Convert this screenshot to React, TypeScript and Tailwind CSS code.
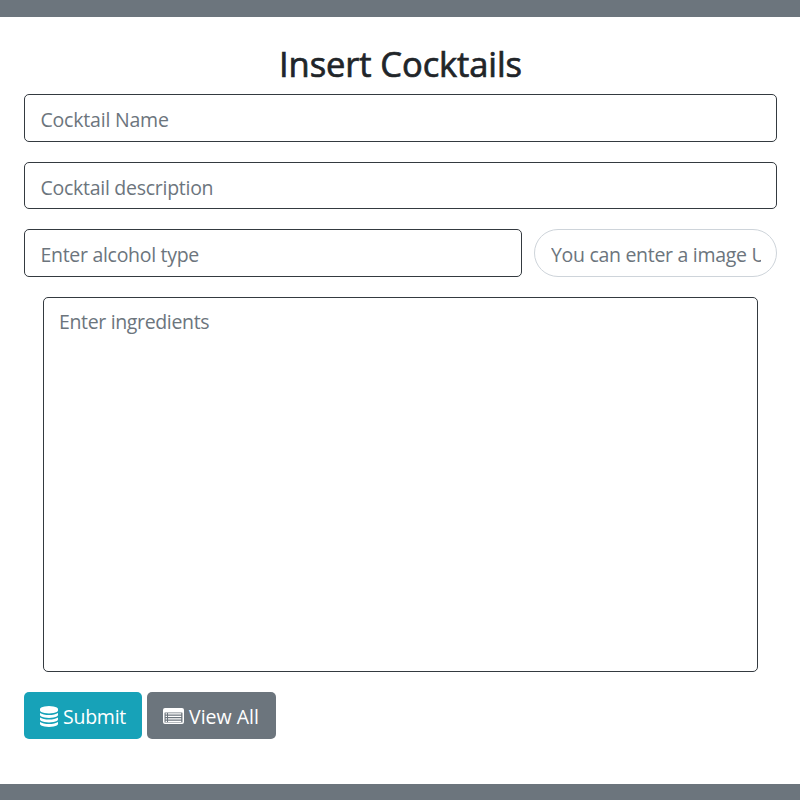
const field =
  "block w-full rounded-[5px] border border-[#343a40] bg-white pr-[15px] pl-[15.5px] pt-[3px] text-[19.5px] text-[#495057] outline-none placeholder:text-[#6c757d] placeholder:opacity-100";

function DatabaseIcon() {
  return (
    <svg className="mr-[5px] h-[21px] w-[18px] shrink-0" viewBox="0 0 1536 1792" fill="currentColor">
      <path d="M768 768q237 0 443-43t325-127v170q0 69-103 128t-280 93.5-385 34.5-385-34.5-280-93.5-103-128v-170q119 84 325 127t443 43zm0 768q237 0 443-43t325-127v170q0 69-103 128t-280 93.5-385 34.5-385-34.5-280-93.5-103-128v-170q119 84 325 127t443 43zm0-384q237 0 443-43t325-127v170q0 69-103 128t-280 93.5-385 34.5-385-34.5-280-93.5-103-128v-170q119 84 325 127t443 43zm0-1152q208 0 385 34.5t280 93.5 103 128v128q0 69-103 128t-280 93.5-385 34.5-385-34.5-280-93.5-103-128v-128q0-69 103-128t280-93.5 385-34.5z" />
    </svg>
  );
}

function ListIcon() {
  return (
    <svg className="mr-[5px] mb-px h-4 w-[21px] shrink-0" viewBox="0 0 21 16" fill="currentColor">
      <path
        fillRule="evenodd"
        d="M2 0H19Q21 0 21 2V14Q21 16 19 16H2Q0 16 0 14V2Q0 0 2 0ZM2 4.5Q1.5 4.5 1.5 5V14Q1.5 14.6 2 14.6H19Q19.5 14.6 19.5 14V5Q19.5 4.5 19 4.5Z"
      />
      <path d="M2.6 5.2h1.4v1.2H2.6zM5 5.2h13.2v1.2H5zM2.6 7.7h1.4v1.3H2.6zM5 7.7h13.2v1.3H5zM2.6 10.2h1.4v1.3H2.6zM5 10.2h13.2v1.3H5zM2.6 12.7h1.4V14H2.6zM5 12.7h13.2V14H5z" />
    </svg>
  );
}

export default function App() {
  return (
    <div className="flex h-[800px] w-[800px] flex-col overflow-hidden border-t-[17px] border-b-[16px] border-[#6c757d] bg-white pr-[23px] pl-6 font-['Open_Sans','Noto_Sans',sans-serif]">
      <h1 className="mt-[22px] h-[55px] text-center text-[34.5px] leading-[50px] font-medium tracking-[-0.1px] text-[#212529] [-webkit-text-stroke:0.7px_#212529]">
        Insert Cocktails
      </h1>
      <form className="flex flex-col" onSubmit={(e) => e.preventDefault()}>
        <input className={`${field} h-12 tracking-[-0.2px]`} placeholder="Cocktail Name" />
        <input className={`${field} mt-5 h-[47px] tracking-[-0.27px]`} placeholder="Cocktail description" />
        <div className="mt-5 flex gap-3">
          <div className="w-[498px]">
            <input className={`${field} h-12 tracking-[-0.3px]`} placeholder="Enter alcohol type" />
          </div>
          <input
            className="h-12 w-[243px] rounded-full border border-[#ced4da] bg-white px-[15px] pt-[3px] pl-4 text-[19.5px] tracking-[-0.3px] outline-none placeholder:text-[#6c757d] placeholder:opacity-100"
            placeholder="You can enter a image URL"
          />
        </div>
        <div className="mt-5 pr-[19px] pl-[19px]">
          <textarea
            className="block h-[375px] w-full resize-none rounded-[5px] border border-[#343a40] bg-white px-[15px] pt-[9px] text-[19.5px] leading-[30px] tracking-[-0.35px] outline-none placeholder:text-[#6c757d] placeholder:opacity-100"
            placeholder="Enter ingredients"
          />
        </div>
        <div className="mt-5 flex gap-[5px] text-[19.5px] text-white">
          <button className="flex h-[47px] w-[118px] items-center rounded-[5px] bg-[#17a2b8] pt-[2px] pl-4 whitespace-nowrap">
            <DatabaseIcon />
            <span className="pt-px tracking-[-0.25px]">Submit</span>
          </button>
          <button className="flex h-[47px] w-[129px] items-center rounded-[5px] bg-[#6c757d] pt-[2px] pl-4 whitespace-nowrap">
            <ListIcon />
            <span className="pt-px">View All</span>
          </button>
        </div>
      </form>
    </div>
  );
}
